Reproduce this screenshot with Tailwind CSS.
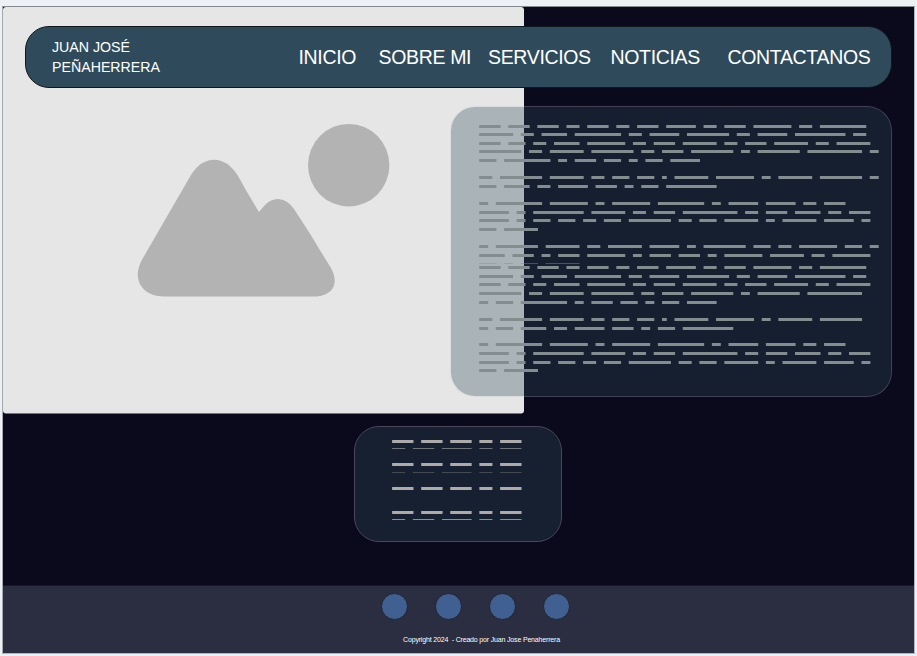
<!DOCTYPE html>
<html lang="es">
<head>
<meta charset="utf-8">
<title>Juan José Peñaherrera</title>
<script src="https://cdn.jsdelivr.net/npm/@tailwindcss/browser@4"></script>
</head>
<body class="bg-[#edf1f6] font-['Liberation_Sans',Arial,sans-serif] w-[917px] h-[656px] overflow-hidden pt-[6px] pl-[2px]">
<div class="relative isolate flex flex-col w-[913px] h-[648px] bg-[#0b091c] border border-t-[#85888c] border-l-[#a5a8ae] border-r-[#b4b5bb] border-b-[#b4b5bb]">
  <!-- Hero image placeholder behind the header and the text card -->
  <svg class="absolute left-0 top-0 -z-10" width="521" height="407" viewBox="3 7 521 407">
    <rect x="3" y="7" width="521" height="406.5" rx="3" fill="#e6e6e6"/>
    <ellipse cx="348.7" cy="165.2" rx="40.7" ry="41.3" fill="#b3b3b3"/>
    <path fill="#b3b3b3" d="M191 175C203 154.500 225 154.500 237.500 175C241 181 245 189 250 197L259 212L264 206C273 195.500 286 197 294 209C303 223 312 236 318 247L331 268C338 281 336 294 317 296.500H164C143 296.500 133 281 140 264C142 259 145 255 147 251Z"/>
  </svg>

  <header class="flex shrink-0 items-center mt-[19px] ml-[22px] w-[867px] h-[62px] rounded-[24px] border border-[#10171d] bg-[#2f4b5b] text-white">
    <div class="ml-[26px] w-[246.5px] text-[14.2px] leading-[20px]">JUAN JOSÉ<br>PEÑAHERRERA</div>
    <nav class="flex text-[19.5px] leading-[24px] tracking-[-0.34px] whitespace-nowrap">
      <a class="w-[80px]">INICIO</a>
      <a class="w-[109.5px]">SOBRE MI</a>
      <a class="w-[122.5px]">SERVICIOS</a>
      <a class="w-[117px]">NOTICIAS</a>
      <a>CONTACTANOS</a>
    </nav>
  </header>

  <main class="flex flex-col">
    <section class="mt-[18px] ml-[447px] w-[442px] h-[291px] rounded-[25px] border border-[#c4c8d2]/30 bg-[#2f4b5b]/33 bg-clip-padding">
      <svg id="article" class="block" width="440" height="289" viewBox="451 107 440 289" fill="#838d90"></svg>
    </section>
    <section class="mt-[29px] ml-[351px] w-[208px] h-[116px] rounded-[25px] border border-[#494858] bg-[#172030]">
      <svg id="notes" class="block" width="206" height="114" viewBox="355 427 206 114" fill="#acaba9"></svg>
    </section>
  </main>

  <footer class="mt-auto flex flex-col items-center h-[68px] border-t border-[#171724] bg-[#2b2d40]">
    <div class="flex gap-[27px] mt-[7px] ml-[33px]">
      <span class="size-[27px] rounded-full border border-[#1d2638] bg-[#416092]"></span>
      <span class="size-[27px] rounded-full border border-[#1d2638] bg-[#416092]"></span>
      <span class="size-[27px] rounded-full border border-[#1d2638] bg-[#416092]"></span>
      <span class="size-[27px] rounded-full border border-[#1d2638] bg-[#416092]"></span>
    </div>
    <p class="mt-[15px] ml-[46px] text-[7px] leading-[10px] tracking-[-0.17px] text-white whitespace-pre">Copyright 2024  - Creado por Juan Jose Penaherrera</p>
  </footer>
</div>
<script>
// Each row: top, word lengths in characters, bar height, opacity
const UNIT = 4.155;
function bars(id, left, rows) {
  let out = '';
  for (const [y, words, h = 3, o = 1] of rows) {
    let c = 0;
    for (const n of words) {
      out += `<rect x="${(left + c * UNIT).toFixed(2)}" y="${y}" width="${(n * UNIT + 0.6).toFixed(2)}" height="${h}" opacity="${o}"/>`;
      c += n + 2;
    }
  }
  document.getElementById(id).innerHTML = out;
}
const a = [5,5,5,3,5,3,5,7,3,5,9,3,11];
const b = [8,3,6,11,3,7,10,3,7,12,3];
const c = [5,4,3,6,9,3,5,8,3,5,8,3,8];
const d = [10,3,8,10,3,5,10,2,10,13];
const e = [3,10,8,3,4,4,1,8,9,2,8,10];
const f = [2,11,9,2,9,11,2,7,7,3,5];
const g = [7,2,12,8,3,5,13,3,5,6,3,5];
const h = [7,2,4,4,3,4,10,3,4,8,2,8,7,2];
const k = [4,8];
bars('article', 479.2, [
  [125,a],[133,b],[142,c],[150,[...d,2]],[159,[4,11,2,5,4,2,4,7]],
  [176,[...e,2]],[185,[4,6,3,7,5,2,4,12]],
  [202,f],[211,g],[219,h],[228,k],
  [245,[2,10,8,3,8,7,2,10,4,3,9,4,2]],[254,[6,5,2,5,9,2,5,5,2,9,8,3,9]],
  [263,[4,2,4,8],1,0.45],
  [266,a],[275,b],[283,c],[292,d],[301,[2,4,11,2,5,4,2,4,7]],
  [318,e],[327,[2,4,6,3,7,5,2,4,12]],
  [343,f],[352,g],[361,h],[369,k]
]);
const n = [5,5,5,3,5], m = [3,5,7,3,5];
bars('notes', 392.1, [
  [440,n],[448,m,1,0.6],[463,n],[472,m,1,0.3],[487,n],[511,n],[519,m,1,0.8]
]);
</script>
</body>
</html>
